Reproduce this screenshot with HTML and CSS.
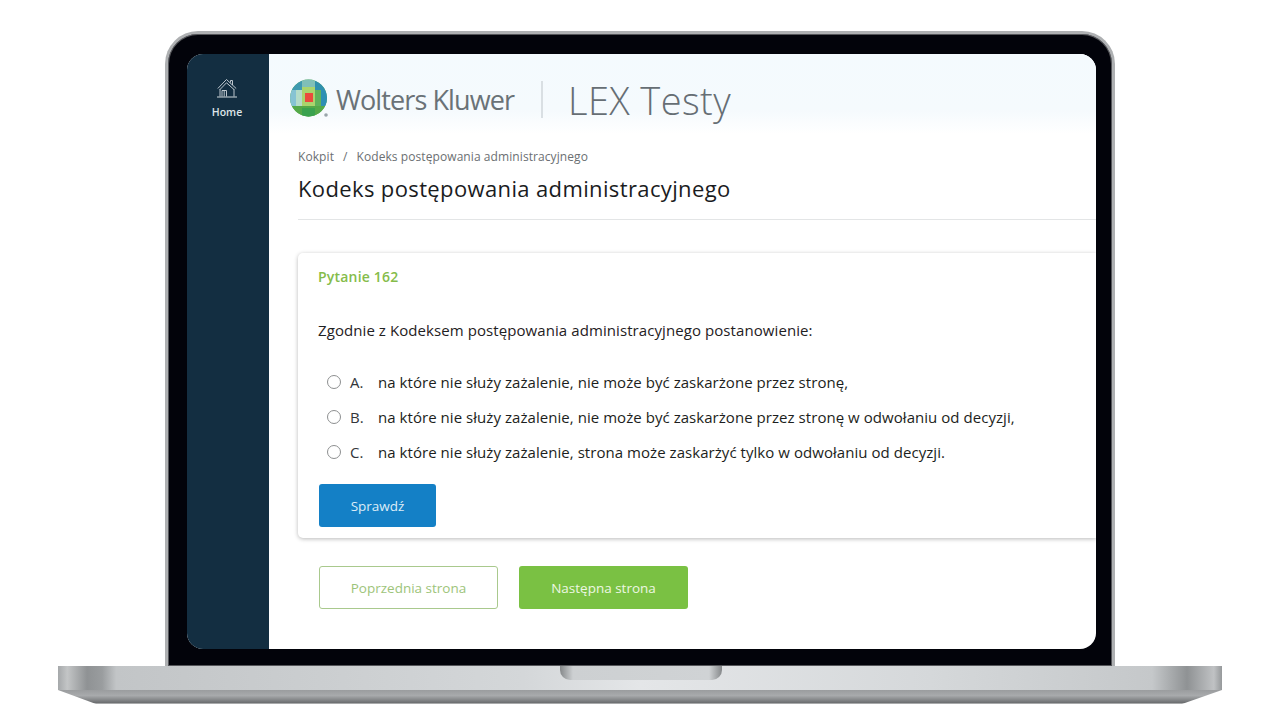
FILE: index.html
```html
<!DOCTYPE html>
<html lang="pl">
<head>
<meta charset="utf-8">
<title>LEX Testy</title>
<link rel="stylesheet" href="styles.css">
</head>
<body>
<div class="stage">
  <div class="lid">
    <div class="screen">
      <aside class="side">
        <svg class="home-icon" viewBox="0 0 20 19" width="20" height="19" fill="none" stroke="#cfd7dc" stroke-width="0.9">
          <path d="M0.800 9.500 8 2l1.500-1.500L19.200 9.500"/>
          <path d="M3 10.500 9.500 3.800 17 10.500"/>
          <path d="M13.500 3.500V1.500H15.500V6"/>
          <path d="M3 10v7.500M17 10v7.500"/>
          <path d="M5 17.500V11.500H9.500V17.500M7.200 11.500V17.500"/>
          <path d="M0 18H20" stroke-width="1.100"/>
        </svg>
        <span class="home-label">Home</span>
      </aside>
      <main class="main">
        <header class="head">
          <svg class="globe" viewBox="0 0 40 40" width="40" height="40">
            <defs><clipPath id="ball"><circle cx="19.500" cy="19" r="18.500"/></clipPath></defs>
            <g clip-path="url(#ball)">
              <rect width="40" height="40" fill="#58ab4a"/>
              <rect x="0" y="0" width="13" height="11" fill="#3f9ab0"/>
              <rect x="26" y="0" width="14" height="11" fill="#2f8fae"/>
              <rect x="13" y="0" width="13" height="8" fill="#7fbfb8"/>
              <rect x="0" y="11" width="7" height="16" fill="#86c3d3"/>
              <rect x="32" y="11" width="8" height="16" fill="#2e8fb4"/>
              <rect x="7" y="11" width="6" height="16" fill="#b4dcc8"/>
              <rect x="26" y="11" width="6" height="16" fill="#5fb25a"/>
              <rect x="13" y="8" width="13" height="21" fill="#a9d46c"/>
              <rect x="16" y="14" width="8" height="9" fill="#ea4a3c"/>
              <rect x="0" y="27" width="40" height="13" fill="#54a948"/>
              <rect x="13" y="29" width="13" height="11" fill="#3aa24f"/>
            </g>
            <circle cx="37" cy="36" r="1.800" fill="#9aa5ab"/>
          </svg>
          <span class="brand">Wolters Kluwer</span>
          <span class="divider"></span>
          <span class="product">LEX Testy</span>
        </header>
        <div class="content">
          <nav class="crumbs"><span>Kokpit</span><span class="sep">/</span><span>Kodeks postępowania administracyjnego</span></nav>
          <h1 class="title">Kodeks postępowania administracyjnego</h1>
          <hr class="rule">
          <section class="card">
            <div class="qnum">Pytanie 162</div>
            <p class="question">Zgodnie z Kodeksem postępowania administracyjnego postanowienie:</p>
            <ul class="options">
              <li class="option"><span class="radio"></span><span class="letter">A.</span><span>na które nie służy zażalenie, nie może być zaskarżone przez stronę,</span></li>
              <li class="option"><span class="radio"></span><span class="letter">B.</span><span>na które nie służy zażalenie, nie może być zaskarżone przez stronę w odwołaniu od decyzji,</span></li>
              <li class="option"><span class="radio"></span><span class="letter">C.</span><span>na które nie służy zażalenie, strona może zaskarżyć tylko w odwołaniu od decyzji.</span></li>
            </ul>
            <button class="btn check">Sprawdź</button>
          </section>
          <div class="pager">
            <button class="btn prev">Poprzednia strona</button>
            <button class="btn next">Następna strona</button>
          </div>
        </div>
      </main>
    </div>
  </div>
  <div class="base">
    <div class="deck"><div class="notch"></div></div>
    <div class="under"></div>
  </div>
</div>
</body>
</html>
```
FILE: styles.css
```css
* { box-sizing: border-box; }
html, body { margin: 0; padding: 0; background: #fff; }
body { font-family: "Open Sans", "Noto Sans", sans-serif; overflow: hidden; }
.stage { width: 1280px; height: 720px; padding-top: 31px; display: flex; flex-direction: column; align-items: center; }
.lid {
  width: 950px; height: 635px; padding: 20px 16px 14px 19px;
  background: #02030a;
  border: 3px solid #aeb0b2; border-bottom: 0;
  border-radius: 33px 33px 0 0;
  box-shadow: inset 0 0 0 1px #55565a;
}
.screen { height: 595px; width: 909px; display: grid; grid-template-columns: 82px 1fr; background: #fff; border-radius: 16px; overflow: hidden; }
.side { background: #132e41; display: flex; flex-direction: column; align-items: center; padding: 25px 2px 0 0; }
.home-icon { display: block; }
.home-label { margin-top: 7px; font-size: 10.500px; line-height: 14px; font-weight: 600; color: #dfe5e9; }
.main { min-width: 0; display: flex; flex-direction: column; }
.head { height: 80px; padding: 26px 0 0 20px; display: flex; align-items: flex-start; background: linear-gradient(180deg, #f4fafe 0%, #f5fafd 70%, #ffffff 100%); }
.globe { margin-top: -1px; flex: none; }
.brand { margin: 0 0 0 7px; width: 180px; font-size: 27px; line-height: 40px; letter-spacing: -0.9px; color: #6a7277; white-space: nowrap; }
.divider { margin: 1px 0 0 25px; width: 2px; height: 37px; background: #d9dfe3; flex: none; }
.product { margin: -2px 0 0 25px; font-size: 38px; line-height: 44px; font-weight: 300; letter-spacing: 0.4px; color: #666e74; white-space: nowrap; }
.content { padding: 0 0 0 29px; flex: 1; min-height: 0; }
.crumbs { display: flex; margin-top: 15px; font-size: 12px; line-height: 16px; letter-spacing: 0.08px; color: #6b6f72; }
.sep { margin: 0 9px; }
.title { margin: 8px 0 0; font-size: 22px; line-height: 30px; font-weight: 400; letter-spacing: 0.37px; color: #1a1c1e; white-space: nowrap; }
.rule { margin: 16px 0 0; border: 0; height: 1px; background: #e3e5e6; }
.card { margin-top: 33px; height: 285px; padding: 14px 0 0 20px; background: #fff; border-radius: 5px 0 0 5px; box-shadow: 0 1px 4px rgba(0, 0, 0, .28); }
.qnum { font-size: 14px; line-height: 20px; font-weight: 600; letter-spacing: 0.2px; color: #85bc4a; }
.question { margin: 33px 0 0; font-size: 15px; line-height: 20px; letter-spacing: 0.08px; color: #1f2123; }
.options { list-style: none; margin: 24px 0 0 9px; padding: 0; }
.option { display: flex; align-items: center; height: 35px; font-size: 15px; letter-spacing: 0.05px; color: #1c1e20; white-space: nowrap; }
.radio { width: 14px; height: 14px; border: 1px solid #8d8f90; border-radius: 50%; margin-right: 9px; flex: none; }
.letter { width: 28px; flex: none; font-weight: 500; color: #33363a; }
.btn { display: block; font-family: inherit; font-size: 13.500px; border-radius: 3px; padding: 0; }
.check { margin: 15px 0 0 1px; width: 117px; height: 43px; border: 0; background: #1480c6; color: #dcecf7; }
.pager { display: flex; gap: 21px; margin: 28px 0 0 21px; }
.prev { width: 179px; height: 43px; background: #fff; border: 1px solid #a9c98d; color: #9dc47a; }
.next { width: 169px; height: 43px; border: 0; background: #7ac143; color: #edf7e2; }
.base { width: 1164px; height: 38px; position: relative; }
.deck { height: 24px; position: relative; background: linear-gradient(90deg, #a5a8aa 0%, #c3c5c6 0.800%, #8f9294 2.500%, #9a9d9f 3.800%, #c2c5c7 5%, #d4d7d9 40%, #e4e6e8 50%, #d5d8da 75%, #c5c8ca 94%, #8f9294 97%, #c0c2c4 99.300%, #96999b 100%); }
.notch { position: absolute; left: 502px; top: 0; width: 162px; height: 14px; border-radius: 0 0 10px 10px; background: linear-gradient(90deg, #85888a 0%, #cdd0d2 8%, #d0d3d5 92%, #85888a 100%); }
.under { height: 14px; background: linear-gradient(180deg, #9a9c9e 0%, #a8aaac 40%, #6e7072 90%, #c9cacb 100%); clip-path: polygon(0 0, 100% 0, 1124px 100%, 38px 100%); }
```
